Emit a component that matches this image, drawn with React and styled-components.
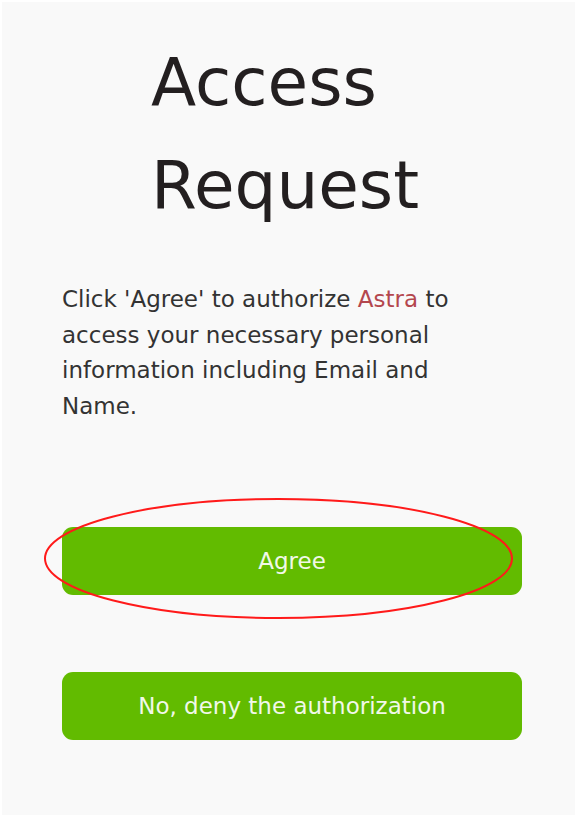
import React from "react";
import styled, { createGlobalStyle } from "styled-components";

const GlobalStyle = createGlobalStyle`
  html, body { margin: 0; padding: 0; background: #ffffff; }
  * { box-sizing: border-box; }
`;

const Panel = styled.main`
  position: relative;
  margin: 2px 0 0 2px;
  width: 573px;
  height: 813px;
  background: #f9f9f9;
  padding: 29px 53px 0 60px;
  display: flex;
  flex-direction: column;
  font-family: "DejaVu Sans", Lato, sans-serif;
`;

const Title = styled.h1`
  margin: 0;
  padding-left: 89px;
  font-size: 66px;
  line-height: 103px;
  font-weight: 400;
  color: #231f20;
`;

const Message = styled.p`
  margin: 45px 0 0;
  max-width: 440px;
  font-size: 23px;
  line-height: 35.5px;
  color: #333333;
`;

const AppName = styled.span`
  color: #b4474e;
`;

const Actions = styled.div`
  margin-top: 103px;
  display: flex;
  flex-direction: column;
  gap: 77px;
`;

const ActionButton = styled.button`
  height: 68px;
  width: 460px;
  border: none;
  border-radius: 11px;
  background: #62bb00;
  color: #f1f8e8;
  font-family: inherit;
  font-size: 23px;
  cursor: pointer;
`;

const Highlight = styled.svg`
  position: absolute;
  left: 41px;
  top: 495px;
  pointer-events: none;
`;

export default function App() {
  return (
    <>
      <GlobalStyle />
      <Panel>
        <Title>Access Request</Title>
        <Message>
          Click 'Agree' to authorize <AppName>Astra</AppName> to access your
          necessary personal information including Email and Name.
        </Message>
        <Actions>
          <ActionButton>Agree</ActionButton>
          <ActionButton>No, deny the authorization</ActionButton>
        </Actions>
        <Highlight width="472" height="124" viewBox="0 0 472 124">
          <ellipse cx="235.5" cy="61.5" rx="233.5" ry="59.5" fill="none" stroke="#ff1a1a" strokeWidth="2" />
        </Highlight>
      </Panel>
    </>
  );
}
